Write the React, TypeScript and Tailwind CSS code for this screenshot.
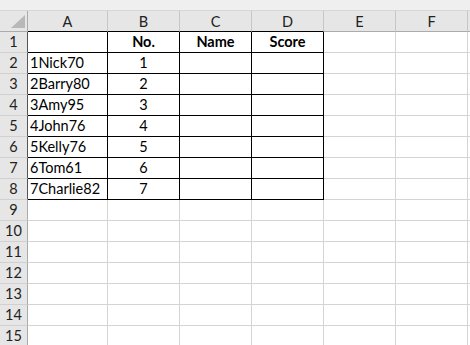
const cols = ["A", "B", "C", "D", "E", "F"];
const colWidths = ["w-[80px]", "w-[72px]", "w-[72px]", "w-[72px]", "w-[72px]", "w-[72px]"];

const rows: (string | number | null)[][] = [
  [null, "No.", "Name", "Score"],
  ["1Nick70", 1, null, null],
  ["2Barry80", 2, null, null],
  ["3Amy95", 3, null, null],
  ["4John76", 4, null, null],
  ["5Kelly76", 5, null, null],
  ["6Tom61", 6, null, null],
  ["7Charlie82", 7, null, null],
];

function Cell({ r, c }: { r: number; c: number }) {
  const inTable = r <= 8 && c <= 3;
  const value = r <= 8 ? rows[r - 1][c] : null;
  const bold = r === 1;
  const centered = c === 1 || bold;
  return (
    <div
      className={`${colWidths[c]} h-[21px] shrink-0 border-b border-r flex items-end pb-[1px] ${
        inTable ? "border-black" : "border-[#d4d4d4]"
      } ${centered ? "justify-center" : "justify-start pl-[2px]"} ${bold ? "font-bold" : ""}`}
    >
      {value !== null && value !== undefined ? <span className="leading-none mb-[2px]">{value}</span> : null}
    </div>
  );
}

export default function App() {
  const rowNums = Array.from({ length: 15 }, (_, i) => i + 1);

  return (
    <div
      className="w-[470px] h-[345px] overflow-hidden bg-white text-[14.5px] text-black"
      style={{ fontFamily: "Lato, 'Open Sans', sans-serif" }}
    >
      {/* top strip */}
      <div className="h-[11px] bg-[#efefef] border-b border-[#d6d6d6]" />

      {/* column headers */}
      <div className="flex h-[21px] bg-[#e6e6e6] text-[#222]">
        <div className="w-[28px] shrink-0 border-r border-b border-[#ababab] relative">
          <svg className="absolute left-[11px] top-[4px]" width="14" height="13" viewBox="0 0 14 13">
            <polygon points="14,0 14,13 0,13" fill="#b8b8b8" />
          </svg>
        </div>
        {cols.map((col, c) => (
          <div
            key={col}
            className={`${colWidths[c]} shrink-0 border-r border-b flex items-center justify-center pt-[2px] ${
              c <= 3 ? "border-b-black border-r-[#c6c6c6]" : "border-b-[#ababab] border-r-[#c6c6c6]"
            }`}
          >
            {col}
          </div>
        ))}
        <div className="flex-1 border-b border-[#ababab]" />
      </div>

      {rowNums.map((r) => (
        <div key={r} className="flex">
          <div
            className={`w-[28px] h-[21px] shrink-0 bg-[#e6e6e6] text-[#222] border-b border-r border-b-[#d0d0d0] flex items-end justify-center pb-[3px] leading-none ${
              r <= 8 ? "border-r-[#555]" : "border-r-[#ababab]"
            }`}
          >
            {r}
          </div>
          {cols.map((col, c) => (
            <Cell key={col} r={r} c={c} />
          ))}
          <div className="flex-1 h-[21px] border-b border-[#d4d4d4]" />
        </div>
      ))}
    </div>
  );
}
